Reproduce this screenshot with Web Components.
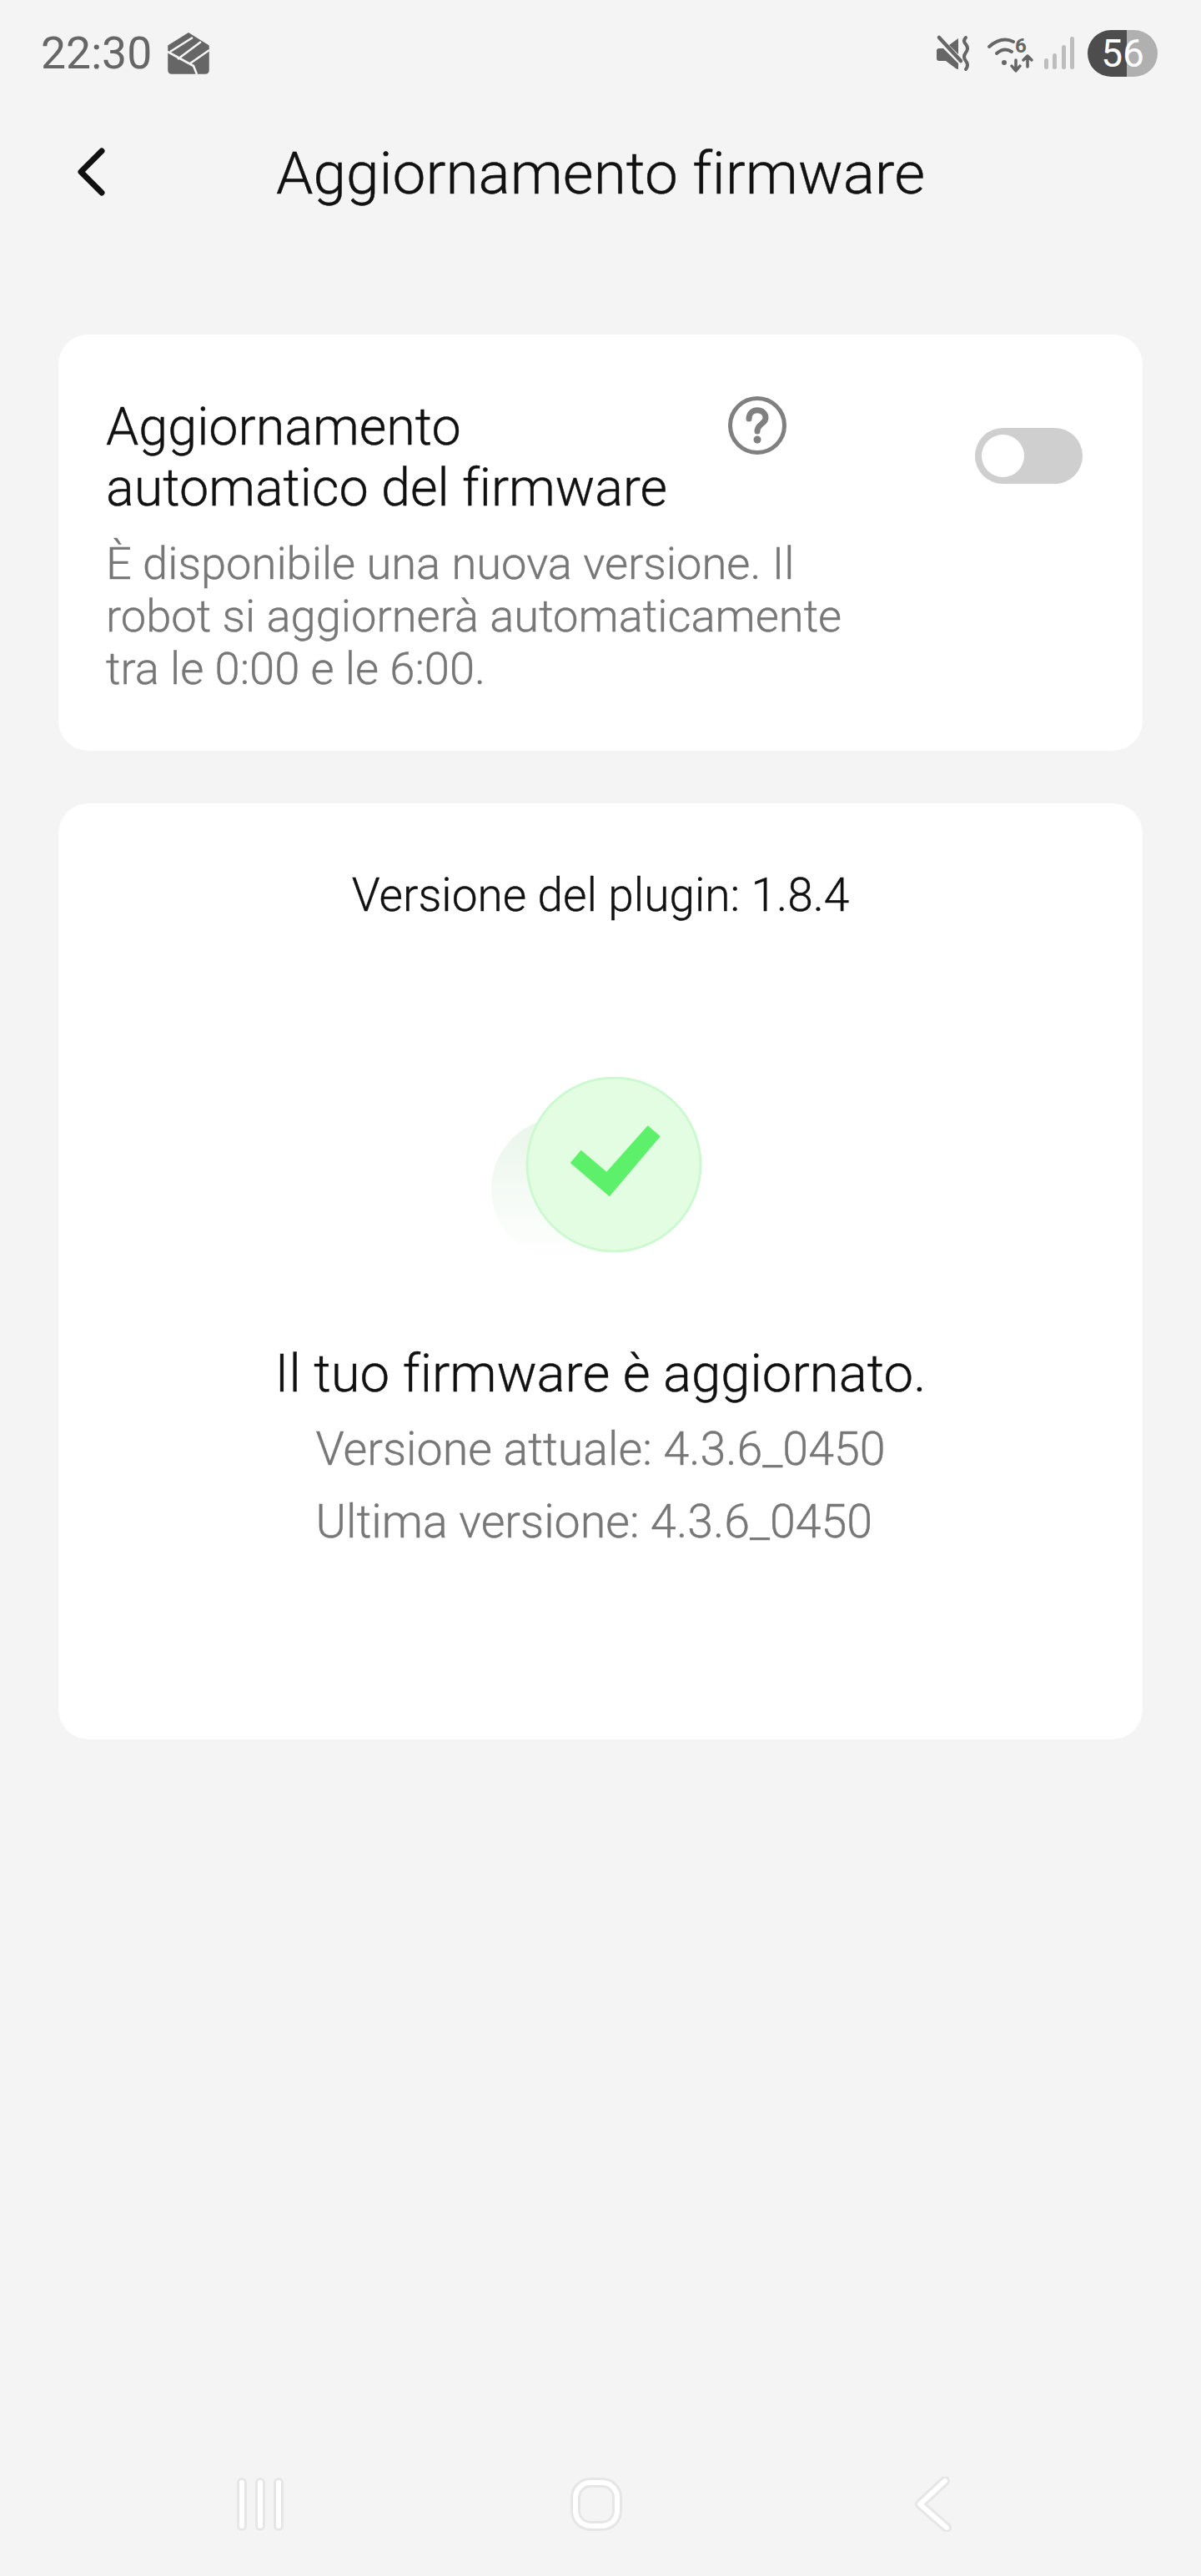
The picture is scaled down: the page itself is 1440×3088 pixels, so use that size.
<!DOCTYPE html>
<html lang="it">
<head>
<meta charset="utf-8">
<title>Aggiornamento firmware</title>
<style>
  html, body { margin: 0; padding: 0; background: #f4f4f4; }
  body { font-family: Roboto, "Noto Sans", sans-serif; font-variant-ligatures: none; font-weight: 300; -webkit-text-stroke: 0.4px; width: 1440px; height: 3088px; }
  fw-screen { height: 3088px; }
</style>
</head>
<body>
<fw-screen>
  <status-bar slot="top" time="22:30" level="56"></status-bar>
  <title-bar slot="top">Aggiornamento firmware</title-bar>
  <fw-card style="--card-h:499px; --card-pad:74px 72px 0 57px; margin-top:115px">
    <auto-update
      title-a="Aggiornamento"
      title-b="automatico del firmware"
      desc-a="È disponibile una nuova versione. Il"
      desc-b="robot si aggiornerà automaticamente"
      desc-c="tra le 0:00 e le 6:00."></auto-update>
  </fw-card>
  <fw-card style="--card-h:1122px; --card-pad:0; margin-top:63px">
    <fw-status
      plugin="Versione del plugin: 1.8.4"
      headline="Il tuo firmware è aggiornato."
      current="Versione attuale: 4.3.6_0450"
      latest="Ultima versione: 4.3.6_0450"></fw-status>
  </fw-card>
  <nav-bar slot="bottom"></nav-bar>
</fw-screen>

<script>
class FwScreen extends HTMLElement {
  constructor() {
    super();
    this.attachShadow({ mode: "open" });
    this.shadowRoot.innerHTML = `
      <style>
        :host { display: flex; flex-direction: column; width: 1440px; background: #f4f4f4; overflow: hidden; }
        .top { display: flex; flex-direction: column; }
        .main { display: flex; flex-direction: column; flex: 1; padding: 0 70px; }
      </style>
      <div class="top"><slot name="top"></slot></div>
      <div class="main"><slot></slot></div>
      <slot name="bottom"></slot>
    `;
  }
}

class StatusBar extends HTMLElement {
  constructor() {
    super();
    this.attachShadow({ mode: "open" });
  }
  connectedCallback() {
    const time = this.getAttribute("time") || "";
    const level = this.getAttribute("level") || "";
    this.shadowRoot.innerHTML = `
      <style>
        :host { display: flex; align-items: center; height: 128px; padding: 0 52px 0 49px; color: #666; font-weight: 400; -webkit-text-stroke: 0; }
        .time { font-size: 53.5px; line-height: 128px; width: 152px; }
        .right { margin-left: auto; display: flex; align-items: center; }
        svg { display: block; overflow: visible; }
        .batt {
          position: relative; width: 84px; height: 56px; border-radius: 28px; margin-left: 16px;
          background: linear-gradient(90deg, #4d4d4d 0 47px, #b0b0b0 47px);
          color: #fff; font-size: 46px; line-height: 56px; text-align: center;
        }
      </style>
      <span class="time">${time}</span>
      <svg width="50" height="50" viewBox="0 0 50 50" fill="none">
        <path d="M25 1 L49 16 L49 45 Q49 49 45 49 L5 49 Q1 49 1 45 L1 16 Z" fill="#666" stroke="#666" stroke-width="1.5" stroke-linejoin="round"/>
        <path d="M30 6 L3 23 M40 11 L12 32 M50 21 L27 37 M0 23 L31 40 L35 50" stroke="#f4f4f4" stroke-width="2.6"/>
      </svg>
      <div class="right">
        <svg width="42" height="42" viewBox="0 0 42 42" fill="none">
          <path d="M1 18 Q1 15 4 15 L9 15 L27 33 L27 39 Q27 41 24 39 L12 30 L4 30 Q1 30 1 27 Z M16 11 L27 3 L27 22 Z" fill="#666"/>
          <path d="M4 2 L30 30" stroke="#666" stroke-width="4.5" stroke-linecap="round"/>
          <path d="M36 2 Q32 6 36 10 Q40 15 36 20 Q32 25 36 30 Q40 35 36 40" stroke="#666" stroke-width="4" stroke-linecap="round"/>
        </svg>
        <svg width="56" height="44" viewBox="0 0 56 44" fill="none" style="margin-left:20px">
          <path d="M2 14 Q17 1 31 8 M11 22 Q20 14 29 20" stroke="#666" stroke-width="4" stroke-linecap="round"/>
          <circle cx="20" cy="33" r="3" fill="#666"/>
          <text x="33" y="21" font-size="24" font-weight="700" fill="#666">6</text>
          <path d="M34 30 L34 42 M29 37 L34 43 L39 37 M48 38 L48 25 M43 30 L48 25 L53 30" stroke="#666" stroke-width="3.5" stroke-linecap="round" stroke-linejoin="round"/>
        </svg>
        <svg width="36" height="40" viewBox="0 0 36 40" style="margin-left:12px">
          <rect x="0" y="26" width="5" height="13" rx="2.5" fill="#bdbdbd"/>
          <rect x="10" y="20" width="5" height="19" rx="2.5" fill="#bdbdbd"/>
          <rect x="21" y="10" width="5" height="29" rx="2.5" fill="#bdbdbd"/>
          <rect x="31" y="0" width="5" height="39" rx="2.5" fill="#bdbdbd"/>
        </svg>
        <div class="batt">${level}</div>
      </div>
    `;
  }
}

class TitleBar extends HTMLElement {
  constructor() {
    super();
    this.attachShadow({ mode: "open" });
    this.shadowRoot.innerHTML = `
      <style>
        :host { display: flex; align-items: center; justify-content: center; position: relative; height: 158px; color: #111; font-size: 71.2px; }
        svg { position: absolute; left: 90px; top: 48px; }
      </style>
      <svg width="40" height="62" viewBox="0 0 40 62" fill="none">
        <path d="M32 5 L7 30 L32 55" stroke="#111" stroke-width="7" stroke-linecap="round" stroke-linejoin="round"/>
      </svg>
      <slot></slot>
    `;
  }
}

class FwCard extends HTMLElement {
  constructor() {
    super();
    this.attachShadow({ mode: "open" });
    this.shadowRoot.innerHTML = `
      <style>
        :host { display: block; box-sizing: border-box; height: var(--card-h); padding: var(--card-pad); background: #fff; border-radius: 36px; }
      </style>
      <slot></slot>
    `;
  }
}

class AutoUpdate extends HTMLElement {
  constructor() {
    super();
    this.attachShadow({ mode: "open" });
  }
  connectedCallback() {
    const a = (n) => this.getAttribute(n) || "";
    this.shadowRoot.innerHTML = `
      <style>
        :host { display: flex; align-items: flex-start; justify-content: space-between; }
        .head { display: flex; align-items: flex-start; }
        .title { color: #111; font-size: 62.9px; line-height: 73px; width: 746px; white-space: nowrap; }
        .desc { color: #777; font-size: 54.3px; line-height: 63px; margin-top: 23px; white-space: nowrap; }
        .help { display: block; flex: none; }
        .toggle { flex: none; position: relative; width: 129px; height: 67px; margin-top: 38px; border-radius: 34px; background: #cfcfcf; }
        .toggle::after { content: ""; position: absolute; left: 8px; top: 8px; width: 51px; height: 51px; border-radius: 50%; background: #fff; }
      </style>
      <div class="text">
        <div class="head">
          <div class="title">${a("title-a")}<br>${a("title-b")}</div>
          <svg class="help" width="70" height="70" viewBox="0 0 70 70" fill="none">
            <circle cx="35" cy="35" r="32.5" stroke="#808080" stroke-width="5"/>
            <path d="M25 27 C25 13 45 14 45 26 C45 33 35 33 35 42" stroke="#808080" stroke-width="7" stroke-linecap="round"/>
            <circle cx="35" cy="52" r="4.5" fill="#808080"/>
          </svg>
        </div>
        <div class="desc">${a("desc-a")}<br>${a("desc-b")}<br>${a("desc-c")}</div>
      </div>
      <div class="toggle"></div>
    `;
  }
}

class FwStatus extends HTMLElement {
  constructor() {
    super();
    this.attachShadow({ mode: "open" });
  }
  connectedCallback() {
    const a = (n) => this.getAttribute(n) || "";
    this.shadowRoot.innerHTML = `
      <style>
        :host { display: flex; flex-direction: column; align-items: center; text-align: center; padding-top: 76px; }
        .plugin { color: #111; font-size: 55px; line-height: 68px; }
        svg { display: block; margin: 184px 0 0 10px; }
        .head { color: #111; font-size: 63.5px; line-height: 76px; margin-top: 98px; }
        .ver { color: #777; font-size: 55.5px; line-height: 87px; margin-top: 9px; text-align: left; }
      </style>
      <div class="plugin">${a("plugin")}</div>
      <svg width="272" height="220" viewBox="0 0 272 220" fill="none">
        <defs>
          <linearGradient id="fade" x1="0" y1="0" x2="0" y2="1">
            <stop offset="0" stop-color="#e9f5ea"/>
            <stop offset="1" stop-color="#ffffff"/>
          </linearGradient>
        </defs>
        <circle cx="85" cy="134" r="85" fill="url(#fade)"/>
        <circle cx="147" cy="105" r="104" fill="#e3fde3" stroke="#cdf9d0" stroke-width="3"/>
        <polygon points="107.7,87.7 138.3,113.7 187.7,58.3 202.7,71.3 141.7,143.3 94.7,103" fill="#5df06a"/>
      </svg>
      <div class="head">${a("headline")}</div>
      <div class="ver">${a("current")}<br>${a("latest")}</div>
    `;
  }
}

class NavBar extends HTMLElement {
  constructor() {
    super();
    this.attachShadow({ mode: "open" });
    const outline = 'stroke="#e6e6e6" stroke-width="12" stroke-linecap="round" stroke-linejoin="round"';
    const inner = 'stroke="#ffffff" stroke-width="6" stroke-linecap="round" stroke-linejoin="round"';
    this.shadowRoot.innerHTML = `
      <style>
        :host { display: block; height: 146px; }
        .row { display: flex; align-items: center; height: 120px; padding-left: 284px; }
        svg { display: block; flex: none; }
      </style>
      <div class="row">
        <svg width="56" height="64" viewBox="0 0 56 64" fill="none">
          <path d="M6 6 L6 58 M28 6 L28 58 M50 6 L50 58" ${outline}/>
          <path d="M6 6 L6 58 M28 6 L28 58 M50 6 L50 58" ${inner}/>
        </svg>
        <svg width="62" height="64" viewBox="0 0 62 64" fill="none" style="margin-left:344px">
          <rect x="6" y="6" width="50" height="52" rx="18" ${outline}/>
          <rect x="6" y="6" width="50" height="52" rx="18" ${inner}/>
        </svg>
        <svg width="44" height="66" viewBox="0 0 44 66" fill="none" style="margin-left:351px">
          <path d="M36 5 L6 33 L38 61" ${outline}/>
          <path d="M36 5 L6 33 L38 61" ${inner}/>
        </svg>
      </div>
    `;
  }
}

customElements.define("fw-screen", FwScreen);
customElements.define("status-bar", StatusBar);
customElements.define("title-bar", TitleBar);
customElements.define("fw-card", FwCard);
customElements.define("auto-update", AutoUpdate);
customElements.define("fw-status", FwStatus);
customElements.define("nav-bar", NavBar);
</script>
</body>
</html>
